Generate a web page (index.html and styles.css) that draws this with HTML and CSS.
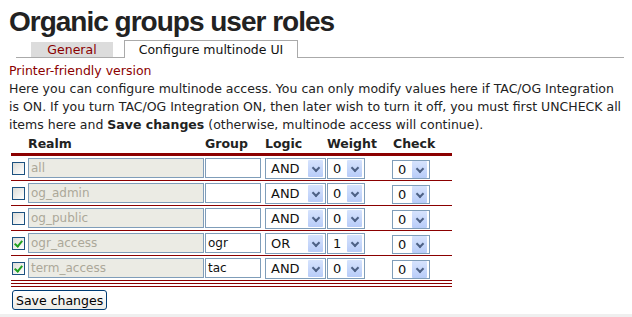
FILE: index.html
```html
<!DOCTYPE html>
<html>
<head>
  <title>Organic groups user roles</title>
  <link rel="stylesheet" href="styles.css">
</head>
<body>
  <div class="page">
    <h1 class="title">Organic groups user roles</h1>

    <ul class="tabs">
      <li class="tab"><a href="#">General</a></li>
      <li class="tab active"><a href="#">Configure multinode UI</a></li>
    </ul>

    <a class="print-link" href="#">Printer-friendly version</a>
    <p class="help">Here you can configure multinode access. You can only modify values here if TAC/OG Integration is ON. If you turn TAC/OG Integration ON, then later wish to turn it off, you must first UNCHECK all items here and <b>Save changes</b> (otherwise, multinode access will continue).</p>

    <table class="roles">
      <thead>
        <tr>
          <th class="col-realm">Realm</th>
          <th class="col-group">Group</th>
          <th class="col-logic">Logic</th>
          <th class="col-weight">Weight</th>
          <th class="col-check">Check</th>
        </tr>
      </thead>
      <tbody>
        <tr>
          <td><div class="cell"><span class="checkbox"></span><span class="input realm">all</span></div></td>
          <td><div class="cell"><span class="input group"></span></div></td>
          <td><div class="cell"><span class="select logic"><span class="value">AND</span><span class="arrow"></span></span></div></td>
          <td><div class="cell"><span class="select small"><span class="value">0</span><span class="arrow"></span></span></div></td>
          <td><div class="cell"><span class="select small check"><span class="value">0</span><span class="arrow"></span></span></div></td>
        </tr>
        <tr>
          <td><div class="cell"><span class="checkbox"></span><span class="input realm">og_admin</span></div></td>
          <td><div class="cell"><span class="input group"></span></div></td>
          <td><div class="cell"><span class="select logic"><span class="value">AND</span><span class="arrow"></span></span></div></td>
          <td><div class="cell"><span class="select small"><span class="value">0</span><span class="arrow"></span></span></div></td>
          <td><div class="cell"><span class="select small check"><span class="value">0</span><span class="arrow"></span></span></div></td>
        </tr>
        <tr>
          <td><div class="cell"><span class="checkbox"></span><span class="input realm">og_public</span></div></td>
          <td><div class="cell"><span class="input group"></span></div></td>
          <td><div class="cell"><span class="select logic"><span class="value">AND</span><span class="arrow"></span></span></div></td>
          <td><div class="cell"><span class="select small"><span class="value">0</span><span class="arrow"></span></span></div></td>
          <td><div class="cell"><span class="select small check"><span class="value">0</span><span class="arrow"></span></span></div></td>
        </tr>
        <tr>
          <td><div class="cell"><span class="checkbox checked"></span><span class="input realm">ogr_access</span></div></td>
          <td><div class="cell"><span class="input group">ogr</span></div></td>
          <td><div class="cell"><span class="select logic"><span class="value">OR</span><span class="arrow"></span></span></div></td>
          <td><div class="cell"><span class="select small"><span class="value">1</span><span class="arrow"></span></span></div></td>
          <td><div class="cell"><span class="select small check"><span class="value">0</span><span class="arrow"></span></span></div></td>
        </tr>
        <tr>
          <td><div class="cell"><span class="checkbox checked"></span><span class="input realm">term_access</span></div></td>
          <td><div class="cell"><span class="input group">tac</span></div></td>
          <td><div class="cell"><span class="select logic"><span class="value">AND</span><span class="arrow"></span></span></div></td>
          <td><div class="cell"><span class="select small"><span class="value">0</span><span class="arrow"></span></span></div></td>
          <td><div class="cell"><span class="select small check"><span class="value">0</span><span class="arrow"></span></span></div></td>
        </tr>
      </tbody>
    </table>
    <div class="table-end"></div>

    <button class="save" type="button">Save changes</button>
  </div>
  <div class="bottom-bar"></div>
</body>
</html>
```

FILE: styles.css
```css
body {
  margin: 0;
  font-family: "DejaVu Sans", Verdana, sans-serif;
  font-size: 12.5px;
  color: #222;
  background: #fff;
}

.page {
  padding: 0 8px 0 9px;
  height: 314px;
  overflow: hidden;
}

.title {
  margin: 0;
  padding-top: 5px;
  font-family: "Liberation Sans", Arial, sans-serif;
  font-size: 28px;
  line-height: 34px;
  letter-spacing: -1px;
  font-weight: bold;
  color: #222;
  white-space: nowrap;
}

/* tabs */
.tabs {
  list-style: none;
  margin: 1px 0 0 7px;
  padding: 0 0 0 15px;
  display: flex;
  align-items: flex-end;
  gap: 11px;
  border-bottom: 1px solid #aaa;
  height: 17px;
}

.tab a {
  display: block;
  height: 15px;
  width: 82px;
  font-size: 12.5px;
  line-height: 15px;
  text-align: center;
  white-space: nowrap;
  color: #8b0000;
  text-decoration: none;
  background: #dcdcdc;
}

.tab.active a {
  height: 17px;
  line-height: 18px;
  width: 172px;
  color: #111;
  background: #fff;
  border: 1px solid #aaa;
  border-bottom: none;
  margin-bottom: -1px;
}

.print-link {
  display: block;
  margin-top: 4px;
  color: #8b0000;
  text-decoration: none;
  line-height: 18px;
}

.help {
  margin: 0;
  line-height: 18px;
  color: #222;
}

/* table */
.roles {
  margin: 0 0 0 2px;
  border-collapse: collapse;
  width: 441px;
}

.roles th {
  text-align: left;
  font-weight: bold;
  font-size: 12.5px;
  padding: 0 0 0 1px;
  height: 19px;
  vertical-align: middle;
  border-bottom: 3px solid #8b0000;
}

.roles th.col-realm { padding-left: 17px; width: 176px; }
.roles th.col-group { width: 59px; }
.roles th.col-logic { width: 61px; }
.roles th.col-weight { width: 64px; }
.roles th.col-check { padding-left: 2px; }

.roles td {
  padding: 0 0 0 1px;
  height: 24px;
  border-bottom: 1px solid #8b0000;
}

.cell {
  display: flex;
  align-items: center;
  height: 24px;
}

.checkbox {
  width: 11px;
  height: 11px;
  border: 1px solid #1c5180;
  background: linear-gradient(135deg, #dcdcd7, #fff);
  margin-right: 3px;
  position: relative;
}

.checkbox.checked::after {
  content: "";
  position: absolute;
  left: 3px;
  top: 1px;
  width: 3px;
  height: 6px;
  border: solid #21a121;
  border-width: 0 2px 2px 0;
  transform: rotate(40deg);
}

.input {
  box-sizing: border-box;
  height: 20px;
  border: 1px solid #7f9db9;
  padding: 0 2px;
  font-size: 12px;
  line-height: 18px;
  background: #fff;
  color: #111;
}

.input.realm {
  width: 176px;
  background: #ebebe4;
  color: #aca899;
}

.input.group {
  width: 56px;
}

.select {
  box-sizing: border-box;
  display: flex;
  align-items: center;
  height: 21px;
  border: 1px solid #7f9db9;
  background: #fff;
  padding: 0 2px 0 5px;
  color: #111;
}

.select .value {
  flex: 1;
  font-size: 13px;
  line-height: 19px;
}

.select .arrow {
  width: 15px;
  height: 17px;
  background: linear-gradient(#d6e3fd, #b8ccf8);
  position: relative;
  border-radius: 1px;
}

.select .arrow::after {
  content: "";
  position: absolute;
  left: 5px;
  top: 5px;
  width: 4px;
  height: 4px;
  border: solid #4d6185;
  border-width: 0 2px 2px 0;
  transform: rotate(45deg);
}

.select.logic { width: 61px; }
.select.small { width: 38px; }
.select.check { height: 19px; margin-top: 2px; }

.table-end {
  margin-left: 2px;
  width: 441px;
  height: 2px;
  border-top: 1px solid #8b0000;
  border-bottom: 1px solid #8b0000;
  margin-top: 2px;
}

.save {
  margin: 3px 0 0 3px;
  height: 20px;
  padding: 0 3px;
  font-family: "DejaVu Sans", Verdana, sans-serif;
  font-size: 12.5px;
  color: #000;
  background: linear-gradient(#fff, #ecebe6);
  border: 1px solid #003c74;
  border-radius: 3px;
}

.bottom-bar {
  height: 3px;
  background: #efefef;
}
```
